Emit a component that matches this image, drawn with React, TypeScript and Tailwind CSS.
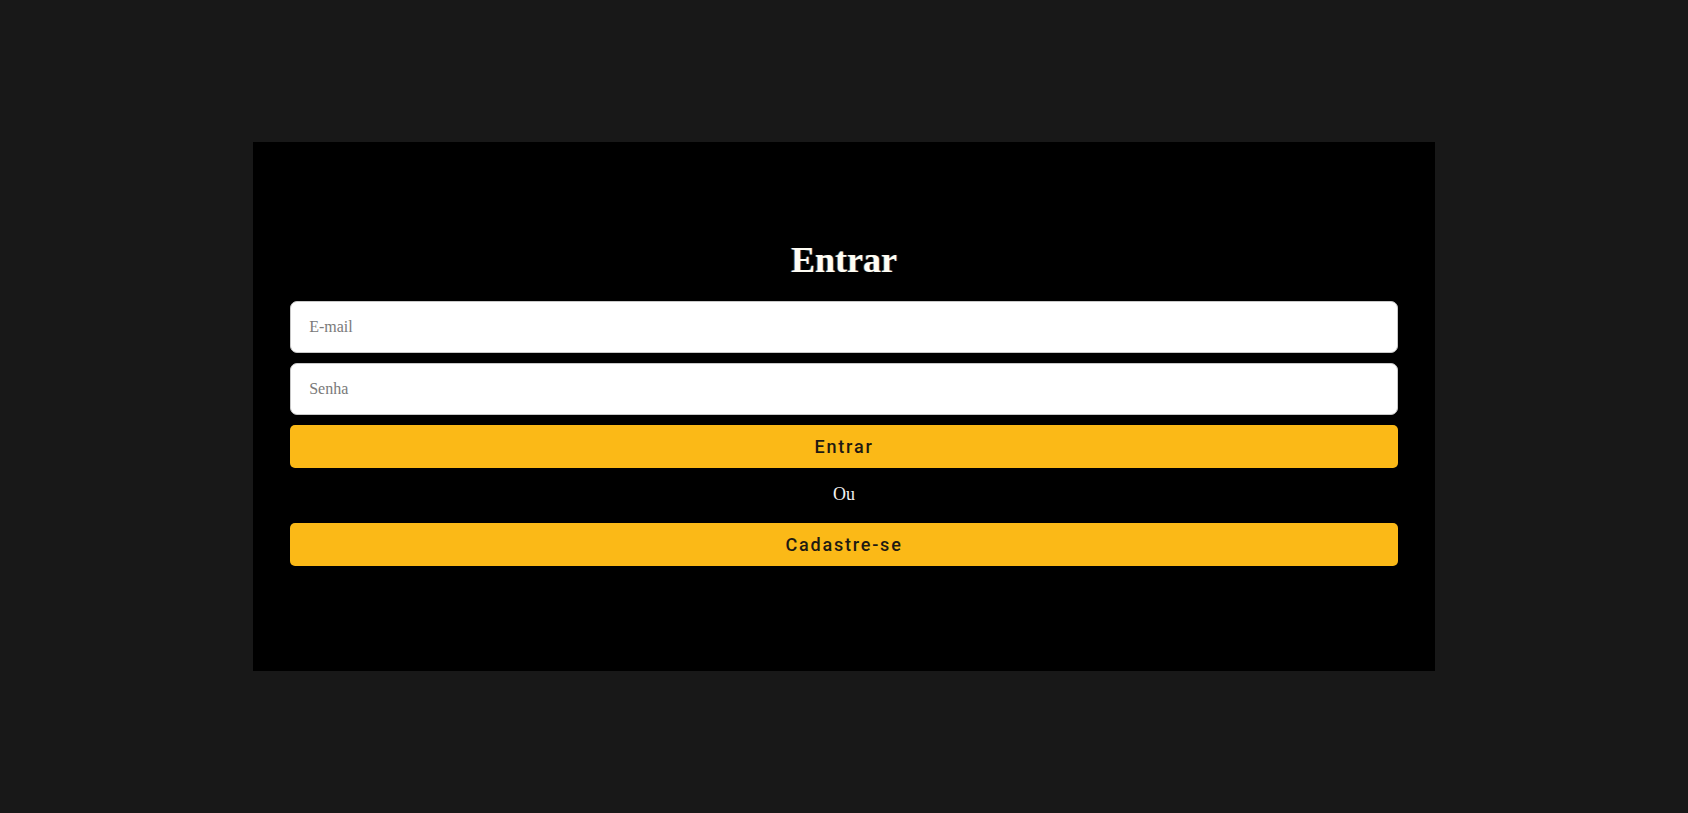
export default function App() {
  return (
    <div className="flex min-h-screen items-center justify-center bg-[#181818]">
      <div className="flex h-[529px] w-[70%] flex-col bg-black px-[37px] pt-[97px]">
        <h1 className="mb-[19px] text-center font-['Liberation_Serif',serif] text-[36px] leading-[43px] font-bold text-[#fffdf4] [text-shadow:1px_0_0_rgba(120,160,255,0.35),-1px_0_0_rgba(255,220,120,0.3)]">
          Entrar
        </h1>
        <form className="flex flex-col gap-[10px]" onSubmit={(e) => e.preventDefault()}>
          <input
            type="email"
            placeholder="E-mail"
            className="h-[52px] w-full rounded-[7px] border border-[#c8c8c8] bg-white px-[18px] font-['Liberation_Serif',serif] text-[16px] text-black outline-none placeholder:text-[#7a7a7a]"
          />
          <input
            type="password"
            placeholder="Senha"
            className="h-[52px] w-full rounded-[7px] border border-[#c8c8c8] bg-white px-[18px] font-['Liberation_Serif',serif] text-[16px] text-black outline-none placeholder:text-[#7a7a7a]"
          />
          <button
            type="submit"
            className="h-[43px] w-full rounded-[5px] bg-[#fbb917] font-['Roboto',sans-serif] text-[18px] font-medium tracking-[1.8px] text-[#1e1a12]"
          >
            Entrar
          </button>
        </form>
        <p className="mt-[13px] mb-[15px] text-center font-['Liberation_Serif',serif] text-[18px] leading-[27px] text-[#f2f2f2]">
          Ou
        </p>
        <button
          type="button"
          className="h-[43px] w-full rounded-[5px] bg-[#fbb917] font-['Roboto',sans-serif] text-[18px] font-medium tracking-[1.8px] text-[#1e1a12]"
        >
          Cadastre-se
        </button>
      </div>
    </div>
  );
}
